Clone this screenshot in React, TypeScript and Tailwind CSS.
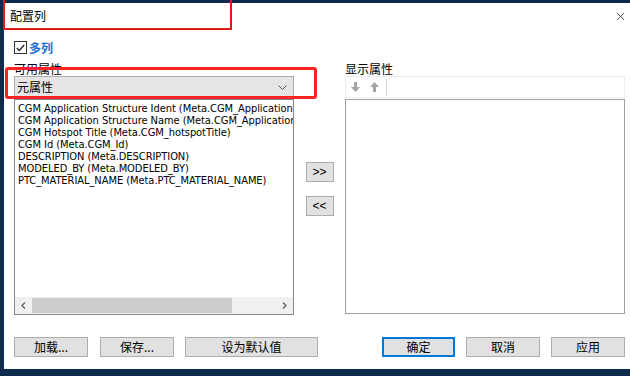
import { X } from 'lucide-react';

const items = [
  'CGM Application Structure Ident (Meta.CGM_ApplicationStructureIdent)',
  'CGM Application Structure Name (Meta.CGM_ApplicationStructureName)',
  'CGM Hotspot Title (Meta.CGM_hotspotTitle)',
  'CGM Id (Meta.CGM_Id)',
  'DESCRIPTION (Meta.DESCRIPTION)',
  'MODELED_BY (Meta.MODELED_BY)',
  'PTC_MATERIAL_NAME (Meta.PTC_MATERIAL_NAME)',
];

const cjk = "font-['Microsoft_YaHei','Noto_Sans_CJK_SC',sans-serif]";

function WinButton({ label, className = '', primary = false }: { label: string; className?: string; primary?: boolean }) {
  return (
    <button
      className={`h-[20px] flex items-center justify-center bg-[#e1e1e1] text-[12px] text-black leading-none ${
        primary ? 'border-2 border-[#0078d7]' : 'border border-[#adadad]'
      } ${className}`}
    >
      {label}
    </button>
  );
}

function ArrowIcon({ up = false }: { up?: boolean }) {
  return (
    <svg width="9" height="10" viewBox="0 0 9 10" className={up ? 'rotate-180' : ''}>
      <rect x="3" y="0" width="3" height="6" fill="#a3a3a3" />
      <path d="M0 5 H9 L4.5 10 Z" fill="#a3a3a3" />
    </svg>
  );
}

export default function App() {
  return (
    <div className={`relative w-[630px] h-[376px] overflow-hidden bg-[#0f2b4b] pl-[4px] pt-[3px] ${cjk}`}>
      <div className="flex flex-col w-[626px] h-[366px] bg-white">
        {/* title bar */}
        <div className="h-[26px] flex items-center justify-between pl-[6px] pr-[3px]">
          <span className="text-[12px] text-black">配置列</span>
          <X className="w-[13px] h-[13px] text-[#222]" strokeWidth={1.4} />
        </div>

        <div className="flex-1 flex flex-col pl-[10px] pr-[5px]">
          <label className="mt-[12px] h-[13px] flex items-center gap-[2px]">
            <span className="w-[13px] h-[13px] border border-[#333] flex items-center justify-center bg-white">
              <svg width="9" height="8" viewBox="0 0 9 8">
                <path d="M0.8 4 L3.3 6.5 L8.2 1" stroke="#222" strokeWidth="1.3" fill="none" />
              </svg>
            </span>
            <span className="text-[12px] font-bold text-[#1a6fcc]">多列</span>
          </label>

          <div className="flex mt-[8px]">
            {/* left column */}
            <div className="w-[280px] flex flex-col">
              <span className="h-[13px] text-[12px] leading-[13px] text-black">可用属性</span>
              <div className="mt-[1px] h-[22px] flex items-center justify-between bg-[#e5e5e5] border border-[#adadad] pl-[2px] pr-[6px]">
                <span className="text-[12px] text-black">元属性</span>
                <svg width="9" height="5" viewBox="0 0 9 5">
                  <path d="M0.5 0.5 L4.5 4.5 L8.5 0.5" stroke="#555" strokeWidth="1" fill="none" />
                </svg>
              </div>
              <div className="mt-[1px] h-[216px] border border-[#828790] flex flex-col justify-between overflow-hidden">
                <div className="pt-[3px] pl-[3px] font-['Tahoma','DejaVu_Sans_Condensed','Liberation_Sans',sans-serif] text-[11px] leading-[12px] tracking-[-0.05px] text-black whitespace-nowrap">
                  {items.map((it) => (
                    <div key={it}>{it}</div>
                  ))}
                </div>
                <div className="h-[17px] flex items-center bg-[#f0f0f0]">
                  <span className="w-[17px] flex justify-center">
                    <svg width="5" height="7" viewBox="0 0 5 7">
                      <path d="M4 0.5 L1 3.5 L4 6.5" stroke="#606060" strokeWidth="1.3" fill="none" />
                    </svg>
                  </span>
                  <div className="flex-1 h-[17px] flex items-center">
                    <div className="w-[200px] h-[15px] bg-[#cdcdcd]" />
                  </div>
                  <span className="w-[17px] flex justify-center">
                    <svg width="5" height="7" viewBox="0 0 5 7">
                      <path d="M1 0.5 L4 3.5 L1 6.5" stroke="#606060" strokeWidth="1.3" fill="none" />
                    </svg>
                  </span>
                </div>
              </div>
            </div>

            {/* transfer buttons */}
            <div className="w-[51px] flex flex-col items-center pt-[100px] gap-[14px]">
              <WinButton label=">>" className="w-[28px] font-['Liberation_Sans',sans-serif]" />
              <WinButton label="<<" className="w-[28px] font-['Liberation_Sans',sans-serif]" />
            </div>

            {/* right column */}
            <div className="flex-1 flex flex-col">
              <span className="h-[13px] text-[12px] leading-[13px] text-black">显示属性</span>
              <div className="mt-[1px] h-[22px] flex items-center border border-[#ececec] pl-[5px]">
                <ArrowIcon />
                <span className="w-[10px]" />
                <ArrowIcon up />
                <span className="ml-[7px] w-px h-[17px] bg-[#d5d5d5]" />
              </div>
              <div className="mt-[1px] h-[215px] border border-[#a0a0a0]" />
            </div>
          </div>

          {/* bottom buttons */}
          <div className="mt-[22px] flex items-center">
            <WinButton label="加载..." className="w-[74px]" />
            <WinButton label="保存..." className="w-[74px] ml-[12px]" />
            <WinButton label="设为默认值" className="w-[133px] ml-[11px]" />
            <div className="flex-1" />
            <WinButton label="确定" primary className="w-[73px]" />
            <WinButton label="取消" className="w-[74px] ml-[11px]" />
            <WinButton label="应用" className="w-[74px] ml-[11px]" />
          </div>
        </div>
      </div>

      {/* annotation boxes */}
      <div className="absolute left-[3px] top-[-2px] w-[229px] h-[32px] border-2 border-[#e01818]" />
      <div className="absolute left-[5px] top-[67px] w-[312px] h-[32px] border-[3px] border-[#ff2222] rounded-[3px]" />
    </div>
  );
}
